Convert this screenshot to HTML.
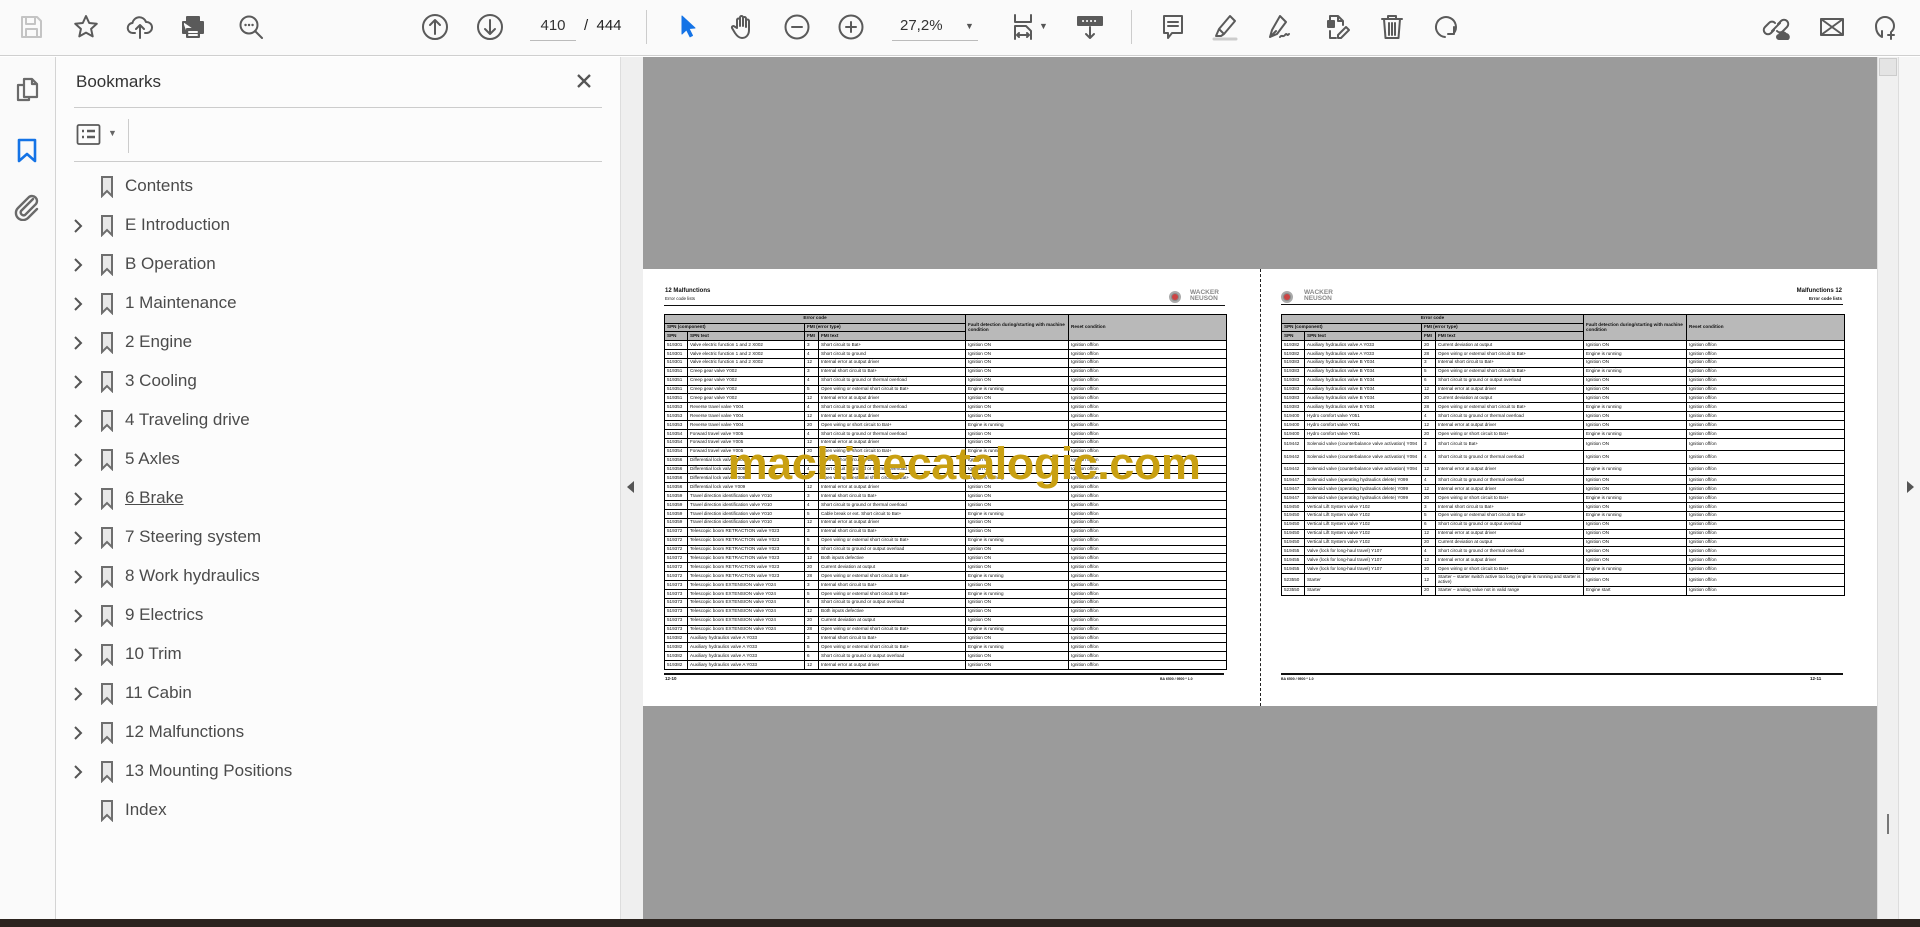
<!DOCTYPE html>
<html><head><meta charset="utf-8">
<style>
*{box-sizing:border-box;margin:0;padding:0}
body{width:1920px;height:927px;overflow:hidden;background:#fff;font-family:"Liberation Sans",sans-serif;position:relative}
.abs{position:absolute}
#tb{left:0;top:0;width:1920px;height:56px;background:#fafafa;border-bottom:1px solid #cfcfcf}
.ic{position:absolute;top:13px;width:28px;height:28px}
.ic svg{width:28px;height:28px;fill:none;stroke:#5a5a5a;stroke-width:2;stroke-linecap:round;stroke-linejoin:round}
#rail{left:0;top:57px;width:56px;height:862px;background:#fafafa;border-right:1px solid #d4d4d4}
#panel{left:56px;top:57px;width:564px;height:862px;background:#fcfcfc}
#strip{left:620px;top:57px;width:23px;height:862px;background:#efefef;border-left:1px solid #ddd}
#doc{left:643px;top:57px;width:1234px;height:863px;background:#9b9b9b}
#vs{left:1877px;top:57px;width:21px;height:863px;background:#f0f0f0;border-left:1px solid #ddd}
#rp{left:1898px;top:57px;width:22px;height:863px;background:#f6f6f6;border-left:1px solid #ddd}
#bot{left:0;top:919px;width:1920px;height:8px;background:#2c241f}
.bm{position:absolute;left:0;height:39px;width:564px;font-size:17px;color:#4b4b4b}
.bm .t{position:absolute;left:69px;top:8px}
.bm .ch{position:absolute;left:17px;top:11px}
.bm .bk{position:absolute;left:44px;top:8px}
#pw{left:643px;top:269px;width:1234px;height:437px;background:#fff}
table.e{position:absolute;border-collapse:collapse;font-size:4.6px;color:#111;table-layout:fixed}
table.e td{border:1px solid #000;padding:0 2px;height:8.9px;line-height:4.8px;overflow:hidden;white-space:nowrap}
table.e tr.h td{background:#b9b9b9;font-weight:bold;height:8.7px}
table.e td.w{white-space:normal}
table.e tr.d td{height:12.5px}
.ph{font-size:6px;font-weight:bold;color:#111}
.ps{font-size:4.5px;color:#111}
</style></head><body>

<div id="tb" class="abs">
 <div class="ic" style="left:17px"><svg viewBox="0 0 28 28" style="stroke:#c4c4c4"><path d="M5 4h15l4 4v16H5z M9 4v7h9V4 M9 24v-8h11v8"/></svg></div>
 <div class="ic" style="left:72px"><svg viewBox="0 0 28 28"><path d="M14 3l3.2 7 7.6.8-5.7 5.1 1.6 7.5L14 19.6 7.3 23.4l1.6-7.5L3.2 10.8l7.6-.8z"/></svg></div>
 <div class="ic" style="left:126px"><svg viewBox="0 0 28 28"><path d="M9 20H7a5 5 0 0 1-.5-10A7 7 0 0 1 20 9a5 5 0 0 1 1 11h-2 M14 25V12 M10 16l4-4 4 4"/></svg></div>
 <div class="ic" style="left:179px"><svg viewBox="0 0 28 28"><path d="M8 9V4h12v5 M4 9h20v11h-4 M8 20H4V9 M8 16h12v8H8z" style="fill:#5a5a5a"/><path d="M10 19h8M10 22h8" style="stroke:#fafafa"/></svg></div>
 <div class="ic" style="left:237px"><svg viewBox="0 0 28 28"><circle cx="12" cy="12" r="8.5"/><path d="M18 18l7 7"/><path d="M8.5 12h.1M12 12h.1M15.5 12h.1" style="stroke-width:2.4"/></svg></div>
 <div class="ic" style="left:421px"><svg viewBox="0 0 28 28"><circle cx="14" cy="14" r="12"/><path d="M14 21V7M9 12l5-5 5 5"/></svg></div>
 <div class="ic" style="left:476px"><svg viewBox="0 0 28 28"><circle cx="14" cy="14" r="12"/><path d="M14 7v14M9 16l5 5 5-5"/></svg></div>
 <div class="abs" style="left:530px;top:17px;width:46px;font-size:15px;color:#333;text-align:center">410</div>
 <div class="abs" style="left:530px;top:40px;width:46px;height:1px;background:#bbb"></div>
 <div class="abs" style="left:584px;top:17px;font-size:15px;color:#222">/&nbsp; 444</div>
 <div class="abs" style="left:646px;top:10px;width:1px;height:34px;background:#ccc"></div>
 <div class="ic" style="left:674px"><svg viewBox="0 0 28 28"><path d="M8 3l13 12-6 .5 3.5 7-2.5 1.3-3.5-7L8 21z" style="fill:#1473e6;stroke:#1473e6;stroke-width:1"/></svg></div>
 <div class="ic" style="left:728px"><svg viewBox="0 0 28 28"><path d="M9 15V7a1.5 1.5 0 0 1 3 0v6V4.5a1.5 1.5 0 0 1 3 0V13V5.5a1.5 1.5 0 0 1 3 0V14V8a1.5 1.5 0 0 1 3 0v9c0 5-3 8-7 8-3 0-5-2-7-5l-3-5a1.5 1.5 0 0 1 2.5-1.5z"/></svg></div>
 <div class="ic" style="left:783px"><svg viewBox="0 0 28 28"><circle cx="14" cy="14" r="11.5"/><path d="M9 14h10"/></svg></div>
 <div class="ic" style="left:837px"><svg viewBox="0 0 28 28"><circle cx="14" cy="14" r="11.5"/><path d="M9 14h10M14 9v10"/></svg></div>
 <div class="abs" style="left:900px;top:17px;font-size:15px;color:#333">27,2%</div>
 <div class="abs" style="left:892px;top:40px;width:86px;height:1px;background:#bbb"></div>
 <div class="abs" style="left:965px;top:21px;font-size:9px;color:#555">▼</div>
 <div class="ic" style="left:1011px"><svg viewBox="0 0 28 28"><path d="M4 2v7h16V2 M4 26V13h11l5 5v8 M6 22h12M6 22l2-2M6 22l2 2M18 22l-2-2M18 22l-2 2"/></svg></div>
 <div class="abs" style="left:1039px;top:21px;font-size:9px;color:#555">▼</div>
 <div class="ic" style="left:1076px"><svg viewBox="0 0 28 28"><path d="M2 4h24v8H2z" style="fill:#5a5a5a"/><path d="M7 8h.1M11 8h.1M15 8h.1M19 8h.1" style="stroke:#fff"/><path d="M14 14v11M10 21l4 4 4-4"/></svg></div>
 <div class="abs" style="left:1131px;top:10px;width:1px;height:34px;background:#ccc"></div>
 <div class="ic" style="left:1159px"><svg viewBox="0 0 28 28"><path d="M5 3h18v17H13l-4 5v-5H5z M9 9h10M9 13h10"/></svg></div>
 <div class="ic" style="left:1211px"><svg viewBox="0 0 28 28"><path d="M19 3l5 5-11 13-5-5z M8 16l-3 7h5l3-2"/><path d="M3 26h22" style="stroke:#ccc;stroke-width:3"/></svg></div>
 <div class="ic" style="left:1266px"><svg viewBox="0 0 28 28"><path d="M14 3l6 6-9 12-7 3 2-7z M4 24l6-6 M14 24c2-3 3 1 5-2s2 2 4-1"/></svg></div>
 <div class="ic" style="left:1324px"><svg viewBox="0 0 28 28"><path d="M6 3h8l5 5v4 M14 3v5h5 M6 3v9 M6 18v7h6 M22 14l3 3-8 8h-3v-3z"/><path d="M4 8h6v6H4z" style="fill:#5a5a5a"/></svg></div>
 <div class="ic" style="left:1378px"><svg viewBox="0 0 28 28"><path d="M4 6h20M10 6V3h8v3M6 6l1.5 19h13L22 6M11 10v12M14 10v12M17 10v12"/></svg></div>
 <div class="ic" style="left:1433px"><svg viewBox="0 0 28 28"><path d="M12 24A10 10 0 1 1 21 20M21 14v7h-6"/></svg></div>
 <div class="ic" style="left:1762px"><svg viewBox="0 0 28 28"><path d="M12 17l-3 3a4 4 0 0 1-6-6l4-4a4 4 0 0 1 6 0M16 11l3-3a4 4 0 0 1 6 6l-4 4a4 4 0 0 1-6 0M10 18l8-8"/><path d="M17 26h9a3 3 0 0 0-2-5 4 4 0 0 0-7 1 2 2 0 0 0 0 4z" style="fill:#5a5a5a"/></svg></div>
 <div class="ic" style="left:1818px"><svg viewBox="0 0 28 28"><path d="M3 6h22v16H3z M3 6l22 16M25 6L3 22"/></svg></div>
 <div class="ic" style="left:1872px"><svg viewBox="0 0 28 28"><path d="M10 24c-4-2-6-6-6-11a9 9 0 0 1 18 0c0 2-1 4-2 5M10 24v-6 M19 19v7M16 22h6"/></svg></div>
</div>

<div id="rail" class="abs">
 <svg class="abs" style="left:13px;top:19px" width="28" height="28" viewBox="0 0 28 28" fill="none" stroke="#6a6a6a" stroke-width="2.2" stroke-linejoin="round"><path d="M11 3h8l5 5v13H11z M19 3v5h5 M11 9H5v15h11v-3"/></svg>
 <svg class="abs" style="left:14px;top:80px" width="26" height="28" viewBox="0 0 26 28" fill="none" stroke="#1473e6" stroke-width="2.6" stroke-linejoin="round"><path d="M5 3h16v21l-8-7-8 7z"/></svg>
 <svg class="abs" style="left:12px;top:136px" width="30" height="28" viewBox="0 0 30 28" fill="none" stroke="#6a6a6a" stroke-width="2.4" stroke-linecap="round"><path d="M21 6L9 18a3 3 0 0 0 4 4l11-11a5 5 0 0 0-7-7L6 15a7 7 0 0 0 10 10l9-9"/></svg>
</div>

<div id="panel" class="abs">
 <div class="abs" style="left:20px;top:15px;font-size:17px;color:#333">Bookmarks</div>
 <svg class="abs" style="left:519px;top:15px" width="18" height="18" viewBox="0 0 18 18" stroke="#555" stroke-width="2.3"><path d="M3 3l12 12M15 3L3 15"/></svg>
 <div class="abs" style="left:18px;top:50px;width:528px;height:1px;background:#ccc"></div>
 <svg class="abs" style="left:20px;top:66px" width="26" height="24" viewBox="0 0 26 24" fill="none" stroke="#5a5a5a" stroke-width="1.8"><rect x="1.5" y="2" width="22" height="19" rx="1.5"/><path d="M6 8h2M11 8h8M6 14h2M11 14h8" stroke-width="2.4"/></svg>
 <div class="abs" style="left:52px;top:71px;font-size:9px;color:#666">▼</div>
 <div class="abs" style="left:72px;top:62px;width:1px;height:34px;background:#ccc"></div>
 <div class="abs" style="left:18px;top:104px;width:528px;height:1px;background:#ccc"></div>
</div>
<div class="abs" style="left:56px;top:168px;width:564px">
 <div class="bm" style="top:0"><span class="bk"><svg width="14" height="22" viewBox="0 0 14 22" fill="#e8e8e8" stroke="#6e6e6e" stroke-width="2"><path d="M2 1h10v19l-5-5-5 5z"/></svg></span><span class="t">Contents</span></div>
 <div class="bm" style="top:39px"><span class="ch"><svg width="10" height="16" viewBox="0 0 10 16" fill="none" stroke="#555" stroke-width="2"><path d="M2 2l6 6-6 6"/></svg></span><span class="bk"><svg width="14" height="22" viewBox="0 0 14 22" fill="#e8e8e8" stroke="#6e6e6e" stroke-width="2"><path d="M2 1h10v19l-5-5-5 5z"/></svg></span><span class="t">E Introduction</span></div>
 <div class="bm" style="top:78px"><span class="ch"><svg width="10" height="16" viewBox="0 0 10 16" fill="none" stroke="#555" stroke-width="2"><path d="M2 2l6 6-6 6"/></svg></span><span class="bk"><svg width="14" height="22" viewBox="0 0 14 22" fill="#e8e8e8" stroke="#6e6e6e" stroke-width="2"><path d="M2 1h10v19l-5-5-5 5z"/></svg></span><span class="t">B Operation</span></div>
 <div class="bm" style="top:117px"><span class="ch"><svg width="10" height="16" viewBox="0 0 10 16" fill="none" stroke="#555" stroke-width="2"><path d="M2 2l6 6-6 6"/></svg></span><span class="bk"><svg width="14" height="22" viewBox="0 0 14 22" fill="#e8e8e8" stroke="#6e6e6e" stroke-width="2"><path d="M2 1h10v19l-5-5-5 5z"/></svg></span><span class="t">1 Maintenance</span></div>
 <div class="bm" style="top:156px"><span class="ch"><svg width="10" height="16" viewBox="0 0 10 16" fill="none" stroke="#555" stroke-width="2"><path d="M2 2l6 6-6 6"/></svg></span><span class="bk"><svg width="14" height="22" viewBox="0 0 14 22" fill="#e8e8e8" stroke="#6e6e6e" stroke-width="2"><path d="M2 1h10v19l-5-5-5 5z"/></svg></span><span class="t">2 Engine</span></div>
 <div class="bm" style="top:195px"><span class="ch"><svg width="10" height="16" viewBox="0 0 10 16" fill="none" stroke="#555" stroke-width="2"><path d="M2 2l6 6-6 6"/></svg></span><span class="bk"><svg width="14" height="22" viewBox="0 0 14 22" fill="#e8e8e8" stroke="#6e6e6e" stroke-width="2"><path d="M2 1h10v19l-5-5-5 5z"/></svg></span><span class="t">3 Cooling</span></div>
 <div class="bm" style="top:234px"><span class="ch"><svg width="10" height="16" viewBox="0 0 10 16" fill="none" stroke="#555" stroke-width="2"><path d="M2 2l6 6-6 6"/></svg></span><span class="bk"><svg width="14" height="22" viewBox="0 0 14 22" fill="#e8e8e8" stroke="#6e6e6e" stroke-width="2"><path d="M2 1h10v19l-5-5-5 5z"/></svg></span><span class="t">4 Traveling drive</span></div>
 <div class="bm" style="top:273px"><span class="ch"><svg width="10" height="16" viewBox="0 0 10 16" fill="none" stroke="#555" stroke-width="2"><path d="M2 2l6 6-6 6"/></svg></span><span class="bk"><svg width="14" height="22" viewBox="0 0 14 22" fill="#e8e8e8" stroke="#6e6e6e" stroke-width="2"><path d="M2 1h10v19l-5-5-5 5z"/></svg></span><span class="t">5 Axles</span></div>
 <div class="bm" style="top:312px"><span class="ch"><svg width="10" height="16" viewBox="0 0 10 16" fill="none" stroke="#555" stroke-width="2"><path d="M2 2l6 6-6 6"/></svg></span><span class="bk"><svg width="14" height="22" viewBox="0 0 14 22" fill="#e8e8e8" stroke="#6e6e6e" stroke-width="2"><path d="M2 1h10v19l-5-5-5 5z"/></svg></span><span class="t" style="text-decoration:underline">6 Brake</span></div>
 <div class="bm" style="top:351px"><span class="ch"><svg width="10" height="16" viewBox="0 0 10 16" fill="none" stroke="#555" stroke-width="2"><path d="M2 2l6 6-6 6"/></svg></span><span class="bk"><svg width="14" height="22" viewBox="0 0 14 22" fill="#e8e8e8" stroke="#6e6e6e" stroke-width="2"><path d="M2 1h10v19l-5-5-5 5z"/></svg></span><span class="t">7 Steering system</span></div>
 <div class="bm" style="top:390px"><span class="ch"><svg width="10" height="16" viewBox="0 0 10 16" fill="none" stroke="#555" stroke-width="2"><path d="M2 2l6 6-6 6"/></svg></span><span class="bk"><svg width="14" height="22" viewBox="0 0 14 22" fill="#e8e8e8" stroke="#6e6e6e" stroke-width="2"><path d="M2 1h10v19l-5-5-5 5z"/></svg></span><span class="t">8 Work hydraulics</span></div>
 <div class="bm" style="top:429px"><span class="ch"><svg width="10" height="16" viewBox="0 0 10 16" fill="none" stroke="#555" stroke-width="2"><path d="M2 2l6 6-6 6"/></svg></span><span class="bk"><svg width="14" height="22" viewBox="0 0 14 22" fill="#e8e8e8" stroke="#6e6e6e" stroke-width="2"><path d="M2 1h10v19l-5-5-5 5z"/></svg></span><span class="t">9 Electrics</span></div>
 <div class="bm" style="top:468px"><span class="ch"><svg width="10" height="16" viewBox="0 0 10 16" fill="none" stroke="#555" stroke-width="2"><path d="M2 2l6 6-6 6"/></svg></span><span class="bk"><svg width="14" height="22" viewBox="0 0 14 22" fill="#e8e8e8" stroke="#6e6e6e" stroke-width="2"><path d="M2 1h10v19l-5-5-5 5z"/></svg></span><span class="t">10 Trim</span></div>
 <div class="bm" style="top:507px"><span class="ch"><svg width="10" height="16" viewBox="0 0 10 16" fill="none" stroke="#555" stroke-width="2"><path d="M2 2l6 6-6 6"/></svg></span><span class="bk"><svg width="14" height="22" viewBox="0 0 14 22" fill="#e8e8e8" stroke="#6e6e6e" stroke-width="2"><path d="M2 1h10v19l-5-5-5 5z"/></svg></span><span class="t">11 Cabin</span></div>
 <div class="bm" style="top:546px"><span class="ch"><svg width="10" height="16" viewBox="0 0 10 16" fill="none" stroke="#555" stroke-width="2"><path d="M2 2l6 6-6 6"/></svg></span><span class="bk"><svg width="14" height="22" viewBox="0 0 14 22" fill="#e8e8e8" stroke="#6e6e6e" stroke-width="2"><path d="M2 1h10v19l-5-5-5 5z"/></svg></span><span class="t">12 Malfunctions</span></div>
 <div class="bm" style="top:585px"><span class="ch"><svg width="10" height="16" viewBox="0 0 10 16" fill="none" stroke="#555" stroke-width="2"><path d="M2 2l6 6-6 6"/></svg></span><span class="bk"><svg width="14" height="22" viewBox="0 0 14 22" fill="#e8e8e8" stroke="#6e6e6e" stroke-width="2"><path d="M2 1h10v19l-5-5-5 5z"/></svg></span><span class="t">13 Mounting Positions</span></div>
 <div class="bm" style="top:624px"><span class="bk"><svg width="14" height="22" viewBox="0 0 14 22" fill="#e8e8e8" stroke="#6e6e6e" stroke-width="2"><path d="M2 1h10v19l-5-5-5 5z"/></svg></span><span class="t">Index</span></div>
</div>

<div id="strip" class="abs"><div class="abs" style="left:6px;top:424px;width:0;height:0;border-top:6px solid transparent;border-bottom:6px solid transparent;border-right:7px solid #555"></div></div>
<div id="doc" class="abs"></div>
<div id="vs" class="abs"><div class="abs" style="left:1px;top:1px;width:18px;height:18px;background:#e4e4e4;border:1px solid #ccc"></div><div class="abs" style="left:9px;top:757px;width:2px;height:20px;background:#777"></div></div>
<div id="rp" class="abs"><div class="abs" style="left:8px;top:424px;width:0;height:0;border-top:6px solid transparent;border-bottom:6px solid transparent;border-left:7px solid #555"></div></div>
<div id="bot" class="abs"></div>

<div id="pw" class="abs"></div>
<div class="abs" style="left:1260px;top:269px;height:437px;border-left:1.5px dashed #222"></div>

<div class="abs ph" style="left:665px;top:288px">12 Malfunctions</div>
<div class="abs ps" style="left:665px;top:296px">Error code lists</div>
<div class="abs" style="left:664px;top:305px;width:561px;height:1px;background:#111"></div>
<div class="abs" style="left:1169px;top:291px;width:12px;height:12px;border-radius:50%;background:#8a8a8a;border:2px solid #aaa"><div style="width:6px;height:6px;margin:1px;border-radius:50%;background:#c44"></div></div>
<div class="abs" style="left:1190px;top:290px;font-size:6.5px;font-weight:bold;color:#888;line-height:6px">WACKER<br>NEUSON</div>

<table class="e" style="left:664px;top:314px;width:562px">
<colgroup><col style="width:23px"><col style="width:117px"><col style="width:14px"><col style="width:147px"><col style="width:103px"><col style="width:158px"></colgroup>
<tr class="h"><td colspan="4" style="text-align:center">Error code</td><td rowspan="3" class="w">Fault detection during/starting with machine condition</td><td rowspan="3">Reset condition</td></tr>
<tr class="h"><td colspan="2">SPN (component)</td><td colspan="2">FMI (error type)</td></tr>
<tr class="h"><td>SPN</td><td>SPN text</td><td>FMI</td><td>FMI text</td></tr>
<tr><td>519301</td><td>Valve electric function 1 and 2 X002</td><td>3</td><td>Short circuit to Bat+</td><td>Ignition ON</td><td>Ignition off/on</td></tr>
<tr><td>519301</td><td>Valve electric function 1 and 2 X002</td><td>4</td><td>Short circuit to ground</td><td>Ignition ON</td><td>Ignition off/on</td></tr>
<tr><td>519301</td><td>Valve electric function 1 and 2 X002</td><td>12</td><td>Internal error at output driver</td><td>Ignition ON</td><td>Ignition off/on</td></tr>
<tr><td>519351</td><td>Creep gear valve Y002</td><td>3</td><td>Internal short circuit to Bat+</td><td>Ignition ON</td><td>Ignition off/on</td></tr>
<tr><td>519351</td><td>Creep gear valve Y002</td><td>4</td><td>Short circuit to ground or thermal overload</td><td>Ignition ON</td><td>Ignition off/on</td></tr>
<tr><td>519351</td><td>Creep gear valve Y002</td><td>5</td><td>Open wiring or external short circuit to Bat+</td><td>Engine is running</td><td>Ignition off/on</td></tr>
<tr><td>519351</td><td>Creep gear valve Y002</td><td>12</td><td>Internal error at output driver</td><td>Ignition ON</td><td>Ignition off/on</td></tr>
<tr><td>519353</td><td>Reverse travel valve Y004</td><td>4</td><td>Short circuit to ground or thermal overload</td><td>Ignition ON</td><td>Ignition off/on</td></tr>
<tr><td>519353</td><td>Reverse travel valve Y004</td><td>12</td><td>Internal error at output driver</td><td>Ignition ON</td><td>Ignition off/on</td></tr>
<tr><td>519353</td><td>Reverse travel valve Y004</td><td>20</td><td>Open wiring or short circuit to Bat+</td><td>Engine is running</td><td>Ignition off/on</td></tr>
<tr><td>519354</td><td>Forward travel valve Y005</td><td>4</td><td>Short circuit to ground or thermal overload</td><td>Ignition ON</td><td>Ignition off/on</td></tr>
<tr><td>519354</td><td>Forward travel valve Y005</td><td>12</td><td>Internal error at output driver</td><td>Ignition ON</td><td>Ignition off/on</td></tr>
<tr><td>519354</td><td>Forward travel valve Y005</td><td>20</td><td>Open wiring or short circuit to Bat+</td><td>Engine is running</td><td>Ignition off/on</td></tr>
<tr><td>519356</td><td>Differential lock valve Y009</td><td>3</td><td>Internal short circuit to Bat+</td><td>Ignition ON</td><td>Ignition off/on</td></tr>
<tr><td>519356</td><td>Differential lock valve Y009</td><td>4</td><td>Short circuit to ground or thermal overload</td><td>Ignition ON</td><td>Ignition off/on</td></tr>
<tr><td>519356</td><td>Differential lock valve Y009</td><td>5</td><td>Open wiring or external short circuit to Bat+</td><td>Engine is running</td><td>Ignition off/on</td></tr>
<tr><td>519356</td><td>Differential lock valve Y009</td><td>12</td><td>Internal error at output driver</td><td>Ignition ON</td><td>Ignition off/on</td></tr>
<tr><td>519359</td><td>Travel direction identification valve Y010</td><td>3</td><td>Internal short circuit to Bat+</td><td>Ignition ON</td><td>Ignition off/on</td></tr>
<tr><td>519359</td><td>Travel direction identification valve Y010</td><td>4</td><td>Short circuit to ground or thermal overload</td><td>Ignition ON</td><td>Ignition off/on</td></tr>
<tr><td>519359</td><td>Travel direction identification valve Y010</td><td>5</td><td>Cable break or ext. Short circuit to Bat+</td><td>Engine is running</td><td>Ignition off/on</td></tr>
<tr><td>519359</td><td>Travel direction identification valve Y010</td><td>12</td><td>Internal error at output driver</td><td>Ignition ON</td><td>Ignition off/on</td></tr>
<tr><td>519372</td><td>Telescopic boom RETRACTION valve Y023</td><td>3</td><td>Internal short circuit to Bat+</td><td>Ignition ON</td><td>Ignition off/on</td></tr>
<tr><td>519372</td><td>Telescopic boom RETRACTION valve Y023</td><td>5</td><td>Open wiring or external short circuit to Bat+</td><td>Engine is running</td><td>Ignition off/on</td></tr>
<tr><td>519372</td><td>Telescopic boom RETRACTION valve Y023</td><td>6</td><td>Short circuit to ground or output overload</td><td>Ignition ON</td><td>Ignition off/on</td></tr>
<tr><td>519372</td><td>Telescopic boom RETRACTION valve Y023</td><td>12</td><td>Both inputs defective</td><td>Ignition ON</td><td>Ignition off/on</td></tr>
<tr><td>519372</td><td>Telescopic boom RETRACTION valve Y023</td><td>20</td><td>Current deviation at output</td><td>Ignition ON</td><td>Ignition off/on</td></tr>
<tr><td>519372</td><td>Telescopic boom RETRACTION valve Y023</td><td>28</td><td>Open wiring or external short circuit to Bat+</td><td>Engine is running</td><td>Ignition off/on</td></tr>
<tr><td>519373</td><td>Telescopic boom EXTENSION valve Y024</td><td>3</td><td>Internal short circuit to Bat+</td><td>Ignition ON</td><td>Ignition off/on</td></tr>
<tr><td>519373</td><td>Telescopic boom EXTENSION valve Y024</td><td>5</td><td>Open wiring or external short circuit to Bat+</td><td>Engine is running</td><td>Ignition off/on</td></tr>
<tr><td>519373</td><td>Telescopic boom EXTENSION valve Y024</td><td>6</td><td>Short circuit to ground or output overload</td><td>Ignition ON</td><td>Ignition off/on</td></tr>
<tr><td>519373</td><td>Telescopic boom EXTENSION valve Y024</td><td>12</td><td>Both inputs defective</td><td>Ignition ON</td><td>Ignition off/on</td></tr>
<tr><td>519373</td><td>Telescopic boom EXTENSION valve Y024</td><td>20</td><td>Current deviation at output</td><td>Ignition ON</td><td>Ignition off/on</td></tr>
<tr><td>519373</td><td>Telescopic boom EXTENSION valve Y024</td><td>28</td><td>Open wiring or external short circuit to Bat+</td><td>Engine is running</td><td>Ignition off/on</td></tr>
<tr><td>519382</td><td>Auxiliary hydraulics valve A Y033</td><td>3</td><td>Internal short circuit to Bat+</td><td>Ignition ON</td><td>Ignition off/on</td></tr>
<tr><td>519382</td><td>Auxiliary hydraulics valve A Y033</td><td>5</td><td>Open wiring or external short circuit to Bat+</td><td>Engine is running</td><td>Ignition off/on</td></tr>
<tr><td>519382</td><td>Auxiliary hydraulics valve A Y033</td><td>6</td><td>Short circuit to ground or output overload</td><td>Ignition ON</td><td>Ignition off/on</td></tr>
<tr><td>519382</td><td>Auxiliary hydraulics valve A Y033</td><td>12</td><td>Internal error at output driver</td><td>Ignition ON</td><td>Ignition off/on</td></tr>
</table>
<div class="abs" style="left:664px;top:673px;width:560px;height:1.5px;background:#111"></div>
<div class="abs ps" style="left:665px;top:676px;font-weight:bold">12-10</div>
<div class="abs ps" style="left:1160px;top:677px;font-size:3.5px;font-weight:bold">BA 6500 / 9500 * 1.0</div>

<div class="abs" style="left:1281px;top:291px;width:12px;height:12px;border-radius:50%;background:#8a8a8a;border:2px solid #aaa"><div style="width:6px;height:6px;margin:1px;border-radius:50%;background:#c44"></div></div>
<div class="abs" style="left:1304px;top:290px;font-size:6.5px;font-weight:bold;color:#888;line-height:6px">WACKER<br>NEUSON</div>
<div class="abs ph" style="left:1700px;width:142px;text-align:right;top:288px">Malfunctions 12</div>
<div class="abs ps" style="left:1700px;width:142px;text-align:right;top:296px;font-weight:bold">Error code lists</div>
<div class="abs" style="left:1281px;top:304px;width:562px;height:1px;background:#111"></div>

<table class="e" style="left:1281px;top:314px;width:563px">
<colgroup><col style="width:23px"><col style="width:117px"><col style="width:14px"><col style="width:148px"><col style="width:103px"><col style="width:158px"></colgroup>
<tr class="h"><td colspan="4" style="text-align:center">Error code</td><td rowspan="3" class="w">Fault detection during/starting with machine condition</td><td rowspan="3">Reset condition</td></tr>
<tr class="h"><td colspan="2">SPN (component)</td><td colspan="2">FMI (error type)</td></tr>
<tr class="h"><td>SPN</td><td>SPN text</td><td>FMI</td><td>FMI text</td></tr>
<tr><td>519382</td><td>Auxiliary hydraulics valve A Y033</td><td>20</td><td>Current deviation at output</td><td>Ignition ON</td><td>Ignition off/on</td></tr>
<tr><td>519382</td><td>Auxiliary hydraulics valve A Y033</td><td>28</td><td>Open wiring or external short circuit to Bat+</td><td>Engine is running</td><td>Ignition off/on</td></tr>
<tr><td>519383</td><td>Auxiliary hydraulics valve B Y034</td><td>3</td><td>Internal short circuit to Bat+</td><td>Ignition ON</td><td>Ignition off/on</td></tr>
<tr><td>519383</td><td>Auxiliary hydraulics valve B Y034</td><td>5</td><td>Open wiring or external short circuit to Bat+</td><td>Engine is running</td><td>Ignition off/on</td></tr>
<tr><td>519383</td><td>Auxiliary hydraulics valve B Y034</td><td>6</td><td>Short circuit to ground or output overload</td><td>Ignition ON</td><td>Ignition off/on</td></tr>
<tr><td>519383</td><td>Auxiliary hydraulics valve B Y034</td><td>12</td><td>Internal error at output driver</td><td>Ignition ON</td><td>Ignition off/on</td></tr>
<tr><td>519383</td><td>Auxiliary hydraulics valve B Y034</td><td>20</td><td>Current deviation at output</td><td>Ignition ON</td><td>Ignition off/on</td></tr>
<tr><td>519383</td><td>Auxiliary hydraulics valve B Y034</td><td>28</td><td>Open wiring or external short circuit to Bat+</td><td>Engine is running</td><td>Ignition off/on</td></tr>
<tr><td>519400</td><td>Hydro comfort valve Y051</td><td>4</td><td>Short circuit to ground or thermal overload</td><td>Ignition ON</td><td>Ignition off/on</td></tr>
<tr><td>519400</td><td>Hydro comfort valve Y051</td><td>12</td><td>Internal error at output driver</td><td>Ignition ON</td><td>Ignition off/on</td></tr>
<tr><td>519400</td><td>Hydro comfort valve Y051</td><td>20</td><td>Open wiring or short circuit to Bat+</td><td>Engine is running</td><td>Ignition off/on</td></tr>
<tr class="d"><td>519442</td><td class="w">Solenoid valve (counterbalance valve activation) Y094</td><td>3</td><td>Short circuit to Bat+</td><td>Ignition ON</td><td>Ignition off/on</td></tr>
<tr class="d"><td>519442</td><td class="w">Solenoid valve (counterbalance valve activation) Y094</td><td>4</td><td>Short circuit to ground or thermal overload</td><td>Ignition ON</td><td>Ignition off/on</td></tr>
<tr class="d"><td>519442</td><td class="w">Solenoid valve (counterbalance valve activation) Y094</td><td>12</td><td>Internal error at output driver</td><td>Engine is running</td><td>Ignition off/on</td></tr>
<tr><td>519447</td><td>Solenoid valve (operating hydraulics delete) Y099</td><td>4</td><td>Short circuit to ground or thermal overload</td><td>Ignition ON</td><td>Ignition off/on</td></tr>
<tr><td>519447</td><td>Solenoid valve (operating hydraulics delete) Y099</td><td>12</td><td>Internal error at output driver</td><td>Ignition ON</td><td>Ignition off/on</td></tr>
<tr><td>519447</td><td>Solenoid valve (operating hydraulics delete) Y099</td><td>20</td><td>Open wiring or short circuit to Bat+</td><td>Engine is running</td><td>Ignition off/on</td></tr>
<tr><td>519450</td><td>Vertical Lift System valve Y102</td><td>3</td><td>Internal short circuit to Bat+</td><td>Ignition ON</td><td>Ignition off/on</td></tr>
<tr><td>519450</td><td>Vertical Lift System valve Y102</td><td>5</td><td>Open wiring or external short circuit to Bat+</td><td>Engine is running</td><td>Ignition off/on</td></tr>
<tr><td>519450</td><td>Vertical Lift System valve Y102</td><td>6</td><td>Short circuit to ground or output overload</td><td>Ignition ON</td><td>Ignition off/on</td></tr>
<tr><td>519450</td><td>Vertical Lift System valve Y102</td><td>12</td><td>Internal error at output driver</td><td>Ignition ON</td><td>Ignition off/on</td></tr>
<tr><td>519450</td><td>Vertical Lift System valve Y102</td><td>20</td><td>Current deviation at output</td><td>Ignition ON</td><td>Ignition off/on</td></tr>
<tr><td>519455</td><td>Valve (lock for long-haul travel) Y107</td><td>4</td><td>Short circuit to ground or thermal overload</td><td>Ignition ON</td><td>Ignition off/on</td></tr>
<tr><td>519455</td><td>Valve (lock for long-haul travel) Y107</td><td>12</td><td>Internal error at output driver</td><td>Ignition ON</td><td>Ignition off/on</td></tr>
<tr><td>519455</td><td>Valve (lock for long-haul travel) Y107</td><td>20</td><td>Open wiring or short circuit to Bat+</td><td>Engine is running</td><td>Ignition off/on</td></tr>
<tr class="d"><td>523550</td><td>Starter</td><td>12</td><td class="w">Starter – starter switch active too long (engine is running and starter is active)</td><td>Ignition ON</td><td>Ignition off/on</td></tr>
<tr><td>523550</td><td>Starter</td><td>20</td><td>Starter – analog value not in valid range</td><td>Engine start</td><td>Ignition off/on</td></tr>
</table>
<div class="abs" style="left:1281px;top:673px;width:562px;height:1.5px;background:#111"></div>
<div class="abs ps" style="left:1281px;top:677px;font-size:3.5px;font-weight:bold">BA 6500 / 9500 * 1.0</div>
<div class="abs ps" style="left:1810px;top:676px;font-weight:bold">12-11</div>

<div class="abs" style="left:714px;top:436px;width:500px;text-align:center;font-size:45px;font-weight:bold;color:#c9a012;letter-spacing:-0.5px;line-height:56px">machinecatalogic.com</div>
</body></html>
